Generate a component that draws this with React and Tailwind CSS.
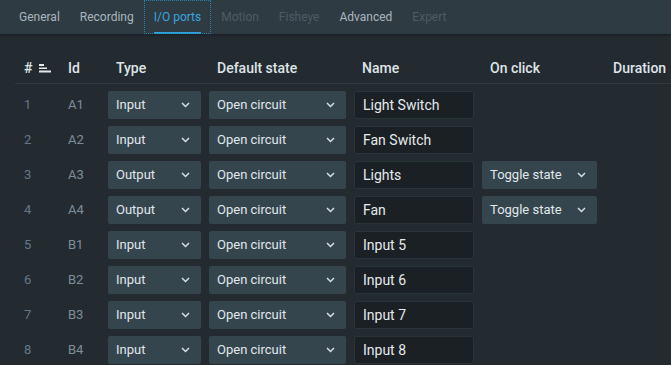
import React from 'react';

const tabs = [
  { label: 'General', state: 'normal' },
  { label: 'Recording', state: 'normal' },
  { label: 'I/O ports', state: 'active' },
  { label: 'Motion', state: 'disabled' },
  { label: 'Fisheye', state: 'disabled' },
  { label: 'Advanced', state: 'normal' },
  { label: 'Expert', state: 'disabled' },
];

const ports = [
  { n: 1, id: 'A1', type: 'Input', name: 'Light Switch' },
  { n: 2, id: 'A2', type: 'Input', name: 'Fan Switch' },
  { n: 3, id: 'A3', type: 'Output', name: 'Lights', click: 'Toggle state' },
  { n: 4, id: 'A4', type: 'Output', name: 'Fan', click: 'Toggle state' },
  { n: 5, id: 'B1', type: 'Input', name: 'Input 5' },
  { n: 6, id: 'B2', type: 'Input', name: 'Input 6' },
  { n: 7, id: 'B3', type: 'Input', name: 'Input 7' },
  { n: 8, id: 'B4', type: 'Input', name: 'Input 8' },
];

function Chevron() {
  return (
    <svg width="9" height="6" viewBox="0 0 9 6" fill="none">
      <path d="M1 1 L4.5 4.5 L8 1" stroke="#d7dfe3" strokeWidth="1.5" />
    </svg>
  );
}

function Select({ value, width }) {
  return (
    <div className={`${width} h-[28px] mr-[8px] shrink-0 rounded-[2px] bg-[#34454e] flex items-center justify-between pl-[8px] pr-[11px] text-[13px] text-[#e1e7ea]`}>
      <span>{value}</span>
      <Chevron />
    </div>
  );
}

export default function App() {
  return (
    <div className="w-[671px] h-[365px] overflow-hidden bg-[#232b31] font-['Roboto',sans-serif]">
      {/* tabs */}
      <div className="h-[34px] bg-[#2f3b43] flex pl-[9px] shadow-[0_1px_3px_rgba(0,0,0,0.35)] relative">
        {tabs.map((t) => (
          <div
            key={t.label}
            className={`h-full px-[10px] flex text-[12px] ${t.state === 'active' ? 'outline outline-1 outline-dotted -outline-offset-1 outline-[#2a82ad]' : ''}`}
          >
            <span
              className={`h-full flex items-center border-b-2 pt-[1px] ${
                t.state === 'active'
                  ? 'border-[#2fa3dc] text-[#36a6de]'
                  : t.state === 'disabled'
                  ? 'border-transparent text-[#4c5b64]'
                  : 'border-transparent text-[#a8b6be]'
              }`}
            >
              {t.label}
            </span>
          </div>
        ))}
      </div>

      <div className="ml-[15px]">
        {/* header */}
        <div className="flex pl-[9px] pt-[25px] pb-[6px] leading-[18px] text-[14px] font-medium text-[#dfe4e7] border-b border-[#2e3940] whitespace-nowrap">
          <div className="w-[44px] shrink-0 flex items-center">
            <span>#</span>
            <svg className="ml-[7px]" width="12" height="10" viewBox="0 0 12 10">
              <rect x="0" y="1" width="5" height="2" fill="#e3e8ea" />
              <rect x="0" y="4.5" width="8" height="1.5" fill="#e3e8ea" />
              <rect x="0" y="7.5" width="12" height="2" fill="#e3e8ea" />
            </svg>
          </div>
          <div className="w-[40px] shrink-0">Id</div>
          <div className="w-[101px] shrink-0 pl-[8px]">Type</div>
          <div className="w-[145px] shrink-0 pl-[8px]">Default state</div>
          <div className="w-[128px] shrink-0 pl-[8px]">Name</div>
          <div className="w-[123px] shrink-0 pl-[8px]">On click</div>
          <div className="shrink-0 pl-[8px]">Duration</div>
        </div>

        {/* rows */}
        <div className="flex flex-col gap-[7px] pt-[7px] pl-[9px]">
          {ports.map((p) => (
            <div key={p.n} className="flex items-center h-[28px] whitespace-nowrap">
              <div className="w-[44px] shrink-0 text-[13px] text-[#62788a]">{p.n}</div>
              <div className="w-[40px] shrink-0 text-[13px] text-[#7a8e9b]">{p.id}</div>
              <Select value={p.type} width="w-[93px]" />
              <Select value="Open circuit" width="w-[137px]" />
              <div className="w-[120px] h-[28px] mr-[8px] shrink-0 rounded-[2px] bg-[#1a2024] border border-[#29333a] flex items-center pl-[8px] text-[14px] text-[#e6eaec]">
                {p.name}
              </div>
              {p.click && <Select value={p.click} width="w-[115px]" />}
            </div>
          ))}
        </div>
      </div>
    </div>
  );
}
